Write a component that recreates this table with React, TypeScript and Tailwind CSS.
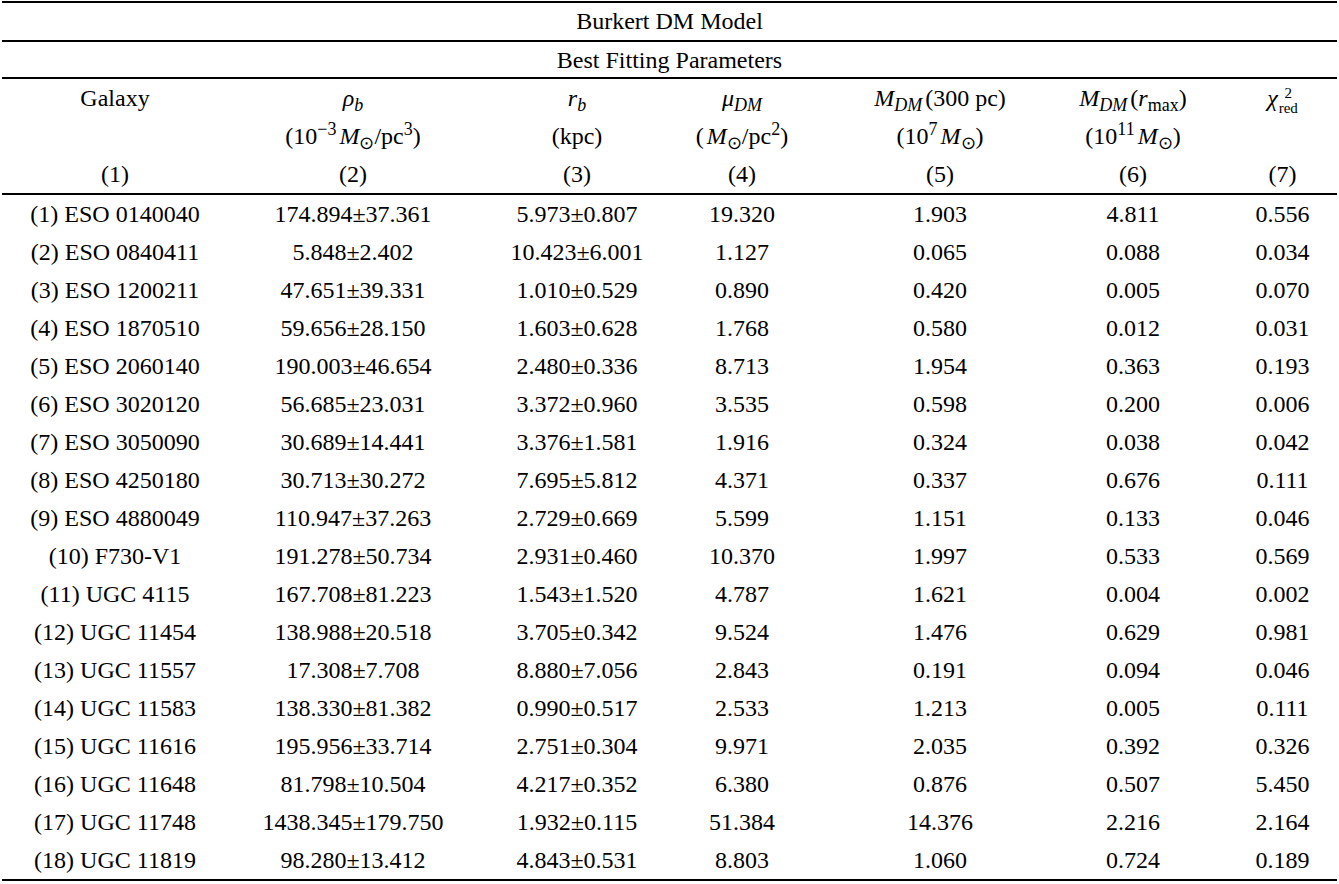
import React from "react";

type Row = [string, string, string, string, string, string, string];

const rows: Row[] = [
  ["(1) ESO 0140040", "174.894±37.361", "5.973±0.807", "19.320", "1.903", "4.811", "0.556"],
  ["(2) ESO 0840411", "5.848±2.402", "10.423±6.001", "1.127", "0.065", "0.088", "0.034"],
  ["(3) ESO 1200211", "47.651±39.331", "1.010±0.529", "0.890", "0.420", "0.005", "0.070"],
  ["(4) ESO 1870510", "59.656±28.150", "1.603±0.628", "1.768", "0.580", "0.012", "0.031"],
  ["(5) ESO 2060140", "190.003±46.654", "2.480±0.336", "8.713", "1.954", "0.363", "0.193"],
  ["(6) ESO 3020120", "56.685±23.031", "3.372±0.960", "3.535", "0.598", "0.200", "0.006"],
  ["(7) ESO 3050090", "30.689±14.441", "3.376±1.581", "1.916", "0.324", "0.038", "0.042"],
  ["(8) ESO 4250180", "30.713±30.272", "7.695±5.812", "4.371", "0.337", "0.676", "0.111"],
  ["(9) ESO 4880049", "110.947±37.263", "2.729±0.669", "5.599", "1.151", "0.133", "0.046"],
  ["(10) F730-V1", "191.278±50.734", "2.931±0.460", "10.370", "1.997", "0.533", "0.569"],
  ["(11) UGC 4115", "167.708±81.223", "1.543±1.520", "4.787", "1.621", "0.004", "0.002"],
  ["(12) UGC 11454", "138.988±20.518", "3.705±0.342", "9.524", "1.476", "0.629", "0.981"],
  ["(13) UGC 11557", "17.308±7.708", "8.880±7.056", "2.843", "0.191", "0.094", "0.046"],
  ["(14) UGC 11583", "138.330±81.382", "0.990±0.517", "2.533", "1.213", "0.005", "0.111"],
  ["(15) UGC 11616", "195.956±33.714", "2.751±0.304", "9.971", "2.035", "0.392", "0.326"],
  ["(16) UGC 11648", "81.798±10.504", "4.217±0.352", "6.380", "0.876", "0.507", "5.450"],
  ["(17) UGC 11748", "1438.345±179.750", "1.932±0.115", "51.384", "14.376", "2.216", "2.164"],
  ["(18) UGC 11819", "98.280±13.412", "4.843±0.531", "8.803", "1.060", "0.724", "0.189"],
];

// per-column nudges so the centred text lands where the original columns sit
const colCls = [
  "pr-[6px]",
  "pl-[7px]",
  "pl-[30px]",
  "pr-[16px]",
  "pl-[3px]",
  "pl-[22px]",
  "pl-[20px]",
];

const grid = "grid grid-cols-[232px_231px_194px_182px_195px_172px_129px]";

function Msun() {
  return (
    <>
      <i className="ml-[3px]">M</i>
      <sub className="not-italic">⊙</sub>
    </>
  );
}

function Mdm() {
  return (
    <>
      <i>M</i>
      <sub className="italic">DM</sub>
      <span className="inline-block w-[3px]" />
    </>
  );
}

const header: React.ReactNode[][] = [
  [<>Galaxy</>, <>&nbsp;</>, <>(1)</>],
  [
    <>
      <i>ρ</i>
      <sub className="italic">b</sub>
    </>,
    <>
      (10<sup>−3</sup>
      <Msun />
      /pc<sup>3</sup>)
    </>,
    <>(2)</>,
  ],
  [
    <>
      <i>r</i>
      <sub className="italic">b</sub>
    </>,
    <>(kpc)</>,
    <>(3)</>,
  ],
  [
    <>
      <i>μ</i>
      <sub className="italic">DM</sub>
    </>,
    <>
      (<Msun />
      /pc<sup>2</sup>)
    </>,
    <>(4)</>,
  ],
  [
    <>
      <Mdm />
      (300 pc)
    </>,
    <>
      (10<sup>7</sup>
      <Msun />)
    </>,
    <>(5)</>,
  ],
  [
    <>
      <Mdm />
      (<i>r</i>
      <sub>max</sub>)
    </>,
    <>
      (10<sup>11</sup>
      <Msun />)
    </>,
    <>(6)</>,
  ],
  [
    <span className="inline-flex items-center">
      <i>χ</i>
      <span className="ml-[1px] inline-flex flex-col text-[15px] leading-[15px] translate-y-[3px]">
        <span>2</span>
        <span>red</span>
      </span>
    </span>,
    <>&nbsp;</>,
    <>(7)</>,
  ],
];

export default function App() {
  return (
    <div className="min-h-[884px] w-[1339px] bg-white px-[2px] pt-[1px] font-['Liberation_Serif',serif] text-[24px] text-black">
      <div className="w-[1335px] border-t-2 border-black">
        <div className="h-[37px] text-center leading-[37px]">Burkert DM Model</div>
        <div className="h-[37px] border-t-2 border-black text-center leading-[37px]">
          Best Fitting Parameters
        </div>
        <div className={`${grid} border-t-2 border-black`}>
          {header.map((col, i) => (
            <div key={i} className={`flex flex-col text-center ${colCls[i]}`}>
              {col.map((line, j) => (
                <div key={j} className="h-[38px] whitespace-nowrap leading-[38px]">
                  {line}
                </div>
              ))}
            </div>
          ))}
        </div>
        <div className="border-y-2 border-black">
          {rows.map((r, i) => (
            <div key={i} className={grid}>
              {r.map((v, j) => (
                <div key={j} className={`h-[38px] whitespace-nowrap text-center leading-[38px] ${colCls[j]}`}>
                  {v}
                </div>
              ))}
            </div>
          ))}
        </div>
      </div>
    </div>
  );
}
